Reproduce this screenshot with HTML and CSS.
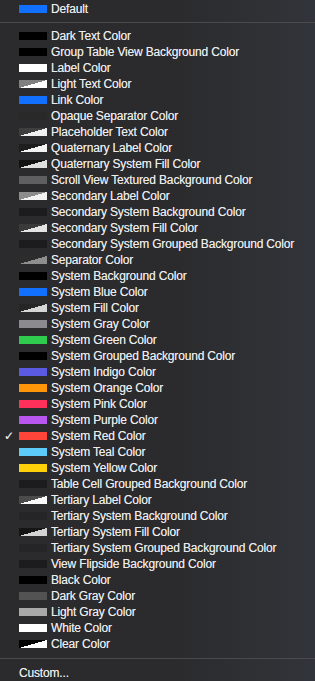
FILE: index.html
```html
<!DOCTYPE html>
<html>
  <head>
    <title>Color Menu</title>
    <link rel="stylesheet" href="styles.css">
  </head>
  <body>
    <div class="menu">
      <div class="item"><span class="check"></span><span class="swatch blue"></span>Default</div>
      <div class="sep"></div>

      <div class="item"><span class="check"></span><span class="swatch black"></span>Dark Text Color</div>
      <div class="item"><span class="check"></span><span class="swatch black"></span>Group Table View Background Color</div>
      <div class="item"><span class="check"></span><span class="swatch white"></span>Label Color</div>
      <div class="item"><span class="check"></span><span class="swatch light-text"></span>Light Text Color</div>
      <div class="item"><span class="check"></span><span class="swatch blue"></span>Link Color</div>
      <div class="item"><span class="check"></span><span class="swatch opaque-sep"></span>Opaque Separator Color</div>
      <div class="item"><span class="check"></span><span class="swatch placeholder"></span>Placeholder Text Color</div>
      <div class="item"><span class="check"></span><span class="swatch quat-label"></span>Quaternary Label Color</div>
      <div class="item"><span class="check"></span><span class="swatch quat-fill"></span>Quaternary System Fill Color</div>
      <div class="item"><span class="check"></span><span class="swatch scroll-bg"></span>Scroll View Textured Background Color</div>
      <div class="item"><span class="check"></span><span class="swatch sec-label"></span>Secondary Label Color</div>
      <div class="item"><span class="check"></span><span class="swatch sec-bg"></span>Secondary System Background Color</div>
      <div class="item"><span class="check"></span><span class="swatch sec-fill"></span>Secondary System Fill Color</div>
      <div class="item"><span class="check"></span><span class="swatch sec-bg"></span>Secondary System Grouped Background Color</div>
      <div class="item"><span class="check"></span><span class="swatch separator"></span>Separator Color</div>
      <div class="item"><span class="check"></span><span class="swatch black"></span>System Background Color</div>
      <div class="item"><span class="check"></span><span class="swatch blue"></span>System Blue Color</div>
      <div class="item"><span class="check"></span><span class="swatch sys-fill"></span>System Fill Color</div>
      <div class="item"><span class="check"></span><span class="swatch gray"></span>System Gray Color</div>
      <div class="item"><span class="check"></span><span class="swatch green"></span>System Green Color</div>
      <div class="item"><span class="check"></span><span class="swatch black"></span>System Grouped Background Color</div>
      <div class="item"><span class="check"></span><span class="swatch indigo"></span>System Indigo Color</div>
      <div class="item"><span class="check"></span><span class="swatch orange"></span>System Orange Color</div>
      <div class="item"><span class="check"></span><span class="swatch pink"></span>System Pink Color</div>
      <div class="item"><span class="check"></span><span class="swatch purple"></span>System Purple Color</div>
      <div class="item"><span class="check">&#10003;</span><span class="swatch red"></span>System Red Color</div>
      <div class="item"><span class="check"></span><span class="swatch teal"></span>System Teal Color</div>
      <div class="item"><span class="check"></span><span class="swatch yellow"></span>System Yellow Color</div>
      <div class="item"><span class="check"></span><span class="swatch sec-bg"></span>Table Cell Grouped Background Color</div>
      <div class="item"><span class="check"></span><span class="swatch ter-label"></span>Tertiary Label Color</div>
      <div class="item"><span class="check"></span><span class="swatch ter-bg"></span>Tertiary System Background Color</div>
      <div class="item"><span class="check"></span><span class="swatch ter-fill"></span>Tertiary System Fill Color</div>
      <div class="item"><span class="check"></span><span class="swatch ter-bg"></span>Tertiary System Grouped Background Color</div>
      <div class="item"><span class="check"></span><span class="swatch sec-bg"></span>View Flipside Background Color</div>
      <div class="item"><span class="check"></span><span class="swatch black"></span>Black Color</div>
      <div class="item"><span class="check"></span><span class="swatch dark-gray"></span>Dark Gray Color</div>
      <div class="item"><span class="check"></span><span class="swatch light-gray"></span>Light Gray Color</div>
      <div class="item"><span class="check"></span><span class="swatch white"></span>White Color</div>
      <div class="item"><span class="check"></span><span class="swatch clear"></span>Clear Color</div>

      <div class="sep bottom"></div>
      <div class="item custom">Custom...</div>
    </div>
  </body>
</html>
```

FILE: styles.css
```css
html,
body {
  margin: 0;
  height: 100%;
}

body {
  background: linear-gradient(to right, #2b2b2d 55%, #31343a);
  font-family: "Liberation Sans", Arial, sans-serif;
  font-size: 12px;
  letter-spacing: -0.17px;
  color: #ececed;
  text-shadow: 0 0 0.4px rgba(255, 255, 255, 0.6);
}

.menu {
  display: flex;
  flex-direction: column;
  padding-top: 1px;
}

/* one row of the color list */
.item {
  display: flex;
  align-items: center;
  height: 16px;
  white-space: nowrap;
}

.check {
  width: 19px;
  padding-left: 4px;
  box-sizing: border-box;
  font-size: 12px;
  font-family: "DejaVu Sans", sans-serif;
}

.swatch {
  width: 28px;
  height: 8px;
  margin-right: 4px;
}

.custom {
  padding-left: 19px;
}

.sep {
  height: 1px;
  margin: 5px 0 5px;
  background-color: #4a4a4c;
}

.sep.bottom {
  margin: 6px 0 6px;
}

/* solid swatches */
.blue { background-color: #1270ff; }
.black { background-color: #000; }
.white { background-color: #fff; }
.opaque-sep { background-color: #29292a; }
.scroll-bg { background-color: #5f5f62; }
.sec-bg { background-color: #1c1c1e; }
.ter-bg { background-color: #252527; }
.gray { background-color: #8b8b8f; }
.green { background-color: #2fcb4e; }
.indigo { background-color: #5b5ae3; }
.orange { background-color: #ff960a; }
.pink { background-color: #ff3059; }
.purple { background-color: #b956f0; }
.red { background-color: #ff453a; }
.teal { background-color: #5ccbfa; }
.yellow { background-color: #fdd00a; }
.dark-gray { background-color: #535353; }
.light-gray { background-color: #a9a9a9; }

/* translucent swatches: over black / over white */
.light-text { background: linear-gradient(to bottom right, #808080 50%, #fff 50%); }
.placeholder { background: linear-gradient(to bottom right, #3f3f3f 50%, #f0f0f0 50%); }
.quat-label { background: linear-gradient(to bottom right, #1e1e1e 50%, #f4f4f4 50%); }
.quat-fill { background: linear-gradient(to bottom right, #121212 50%, #dedede 50%); }
.sec-label { background: linear-gradient(to bottom right, #8c8c8c 50%, #f2f2f2 50%); }
.sec-fill { background: linear-gradient(to bottom right, #3a3a3a 50%, #e4e4e4 50%); }
.separator { background: linear-gradient(to bottom right, #2c2c2c 50%, #8e8e8e 50%); }
.sys-fill { background: linear-gradient(to bottom right, #262626 50%, #d6d6d6 50%); }
.ter-label { background: linear-gradient(to bottom right, #4b4b4b 50%, #fafafa 50%); }
.ter-fill { background: linear-gradient(to bottom right, #151515 50%, #d3d3d3 50%); }
.clear { background: linear-gradient(to bottom right, #000 50%, #fff 50%); }
```
